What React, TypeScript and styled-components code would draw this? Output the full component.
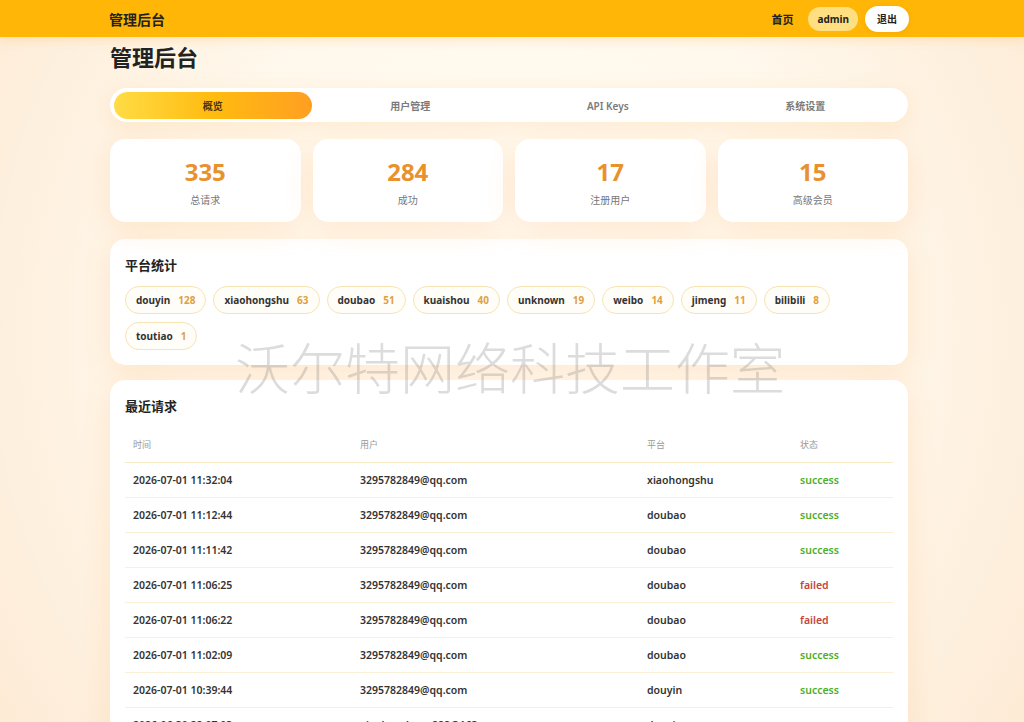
import React from "react";
import styled, { createGlobalStyle } from "styled-components";

const GlobalStyle = createGlobalStyle`
  html, body { margin: 0; padding: 0; }
  body {
    font-family: "Noto Sans", "Noto Sans CJK SC", sans-serif;
    color: #333;
    min-height: 722px;
    background:
      radial-gradient(ellipse 60% 80% at 50% 40%, #fffcf5 0%, #fff8ec 55%, #fdebd6 100%);
    background-color: #fff6e8;
  }
`;

const Header = styled.header`
  height: 37px;
  padding-right: 6px;
  background: #ffb606;
  box-shadow: 0 2px 10px rgba(255, 170, 40, 0.25);
`;

const HeaderInner = styled.div`
  width: 800px;
  height: 100%;
  margin: 0 auto;
  display: flex;
  align-items: center;
  justify-content: space-between;
`;

const Brand = styled.div`
  font-family: "Noto Sans CJK SC", sans-serif;
  font-size: 14px;
  font-weight: 700;
  color: #222;
`;

const Nav = styled.nav`
  display: flex;
  align-items: center;
  gap: 7px;
`;

const NavLink = styled.span`
  font-family: "Noto Sans CJK SC", sans-serif;
  font-size: 11px;
  font-weight: 700;
  color: #222;
  margin-right: 8px;
`;

const Pill = styled.span<{ $variant: "user" | "logout" }>`
  display: inline-flex;
  align-items: center;
  justify-content: center;
  height: ${(p) => (p.$variant === "user" ? "24px" : "26px")};
  padding: 0 ${(p) => (p.$variant === "user" ? "9px" : "12px")};
  border-radius: 13px;
  font-size: 10px;
  font-weight: 700;
  color: #222;
  background: ${(p) => (p.$variant === "user" ? "#ffdf80" : "#ffffff")};
  box-shadow: ${(p) => (p.$variant === "logout" ? "0 1px 4px rgba(200,120,0,0.2)" : "none")};
`;

const Page = styled.div`
  padding-right: 6px;
`;

const Main = styled.main`
  width: 798px;
  margin: 0 auto;
  padding-bottom: 40px;
`;

const PageTitle = styled.h1`
  margin: 4px 0 17px;
  font-family: "Noto Sans CJK SC", sans-serif;
  font-size: 22px;
  line-height: 30px;
  font-weight: 700;
  color: #222;
`;

const Tabs = styled.div`
  height: 34px;
  box-sizing: border-box;
  padding: 4px 4px 3px;
  border-radius: 17px;
  background: #fff;
  box-shadow: 0 6px 22px rgba(250, 170, 80, 0.18);
  display: grid;
  grid-template-columns: repeat(4, 1fr);
`;

const Tab = styled.div<{ $active?: boolean }>`
  display: flex;
  align-items: center;
  justify-content: center;
  border-radius: 14px;
  font-family: "Noto Sans", "Noto Sans CJK SC", sans-serif;
  font-size: 10px;
  font-weight: ${(p) => (p.$active ? 700 : 600)};
  color: ${(p) => (p.$active ? "#4a3510" : "#7a7a7a")};
  background: ${(p) =>
    p.$active ? "linear-gradient(90deg, #ffdc45 0%, #ffbb10 50%, #ff9f22 100%)" : "transparent"};
`;

const StatsGrid = styled.div`
  margin-top: 17px;
  display: grid;
  grid-template-columns: repeat(4, 1fr);
  gap: 12px;
`;

const Card = styled.section`
  background: #fff;
  border-radius: 15px;
  box-shadow: 0 8px 28px rgba(250, 165, 80, 0.2);
`;

const StatCard = styled(Card)`
  height: 83px;
  box-sizing: border-box;
  padding-top: 18px;
  display: flex;
  flex-direction: column;
  align-items: center;
`;

const StatValue = styled.div`
  font-size: 24px;
  line-height: 30px;
  font-weight: 700;
  color: #e8912d;
`;

const StatLabel = styled.div`
  margin-top: 6px;
  font-family: "Noto Sans CJK SC", sans-serif;
  font-size: 10px;
  line-height: 14px;
  color: #777;
`;

const PanelCard = styled(Card)<{ $gap: number }>`
  margin-top: ${(p) => p.$gap}px;
  padding: 17px 15px 15px;
`;

const PanelTitle = styled.h2`
  margin: 0 0 12px;
  font-family: "Noto Sans CJK SC", sans-serif;
  font-size: 13px;
  line-height: 18px;
  font-weight: 700;
  color: #222;
`;

const ChipWrap = styled.div`
  display: flex;
  flex-wrap: wrap;
  gap: 8px 7px;
`;

const Chip = styled.span`
  display: inline-flex;
  align-items: center;
  gap: 8px;
  height: 28px;
  box-sizing: border-box;
  padding: 0 10px;
  border: 1px solid #f6e4b4;
  border-radius: 14px;
  background: #fffdf8;
  font-size: 10px;
  font-weight: 700;
  color: #333;
`;

const ChipCount = styled.span`
  color: #e0a040;
`;

const Table = styled.table`
  width: 100%;
  border-collapse: collapse;
  table-layout: fixed;
`;

const Th = styled.th<{ $w?: number }>`
  width: ${(p) => (p.$w ? `${p.$w}px` : "auto")};
  height: 35px;
  padding: 0 8px;
  text-align: left;
  font-family: "Noto Sans CJK SC", sans-serif;
  font-size: 9px;
  font-weight: 400;
  color: #999;
  border-bottom: 1px solid #f7ebc6;
`;

const Td = styled.td`
  height: 34px;
  padding: 0 8px;
  font-size: 10.5px;
  font-weight: 600;
  color: #333;
  border-bottom: 1px solid #faf0d6;
  white-space: nowrap;
`;

const Status = styled.span<{ $ok: boolean }>`
  font-weight: 600;
  color: ${(p) => (p.$ok ? "#4fae2a" : "#c4463e")};
`;

const Watermark = styled.div`
  position: fixed;
  left: 0;
  right: 0;
  top: 334px;
  padding-right: 4px;
  text-align: center;
  font-family: "Noto Sans CJK SC", sans-serif;
  font-size: 55px;
  line-height: 62px;
  font-weight: 300;
  color: rgba(110, 110, 110, 0.24);
  pointer-events: none;
  white-space: nowrap;
`;

const stats = [
  { value: 335, label: "总请求" },
  { value: 284, label: "成功" },
  { value: 17, label: "注册用户" },
  { value: 15, label: "高级会员" },
];

const platforms: [string, number][] = [
  ["douyin", 128],
  ["xiaohongshu", 63],
  ["doubao", 51],
  ["kuaishou", 40],
  ["unknown", 19],
  ["weibo", 14],
  ["jimeng", 11],
  ["bilibili", 8],
  ["toutiao", 1],
];

const rows: [string, string, string, boolean][] = [
  ["2026-07-01 11:32:04", "3295782849@qq.com", "xiaohongshu", true],
  ["2026-07-01 11:12:44", "3295782849@qq.com", "doubao", true],
  ["2026-07-01 11:11:42", "3295782849@qq.com", "doubao", true],
  ["2026-07-01 11:06:25", "3295782849@qq.com", "doubao", false],
  ["2026-07-01 11:06:22", "3295782849@qq.com", "doubao", false],
  ["2026-07-01 11:02:09", "3295782849@qq.com", "doubao", true],
  ["2026-07-01 10:39:44", "3295782849@qq.com", "douyin", true],
  ["2026-06-30 22:07:03", "xiaohaosheng888@163.com", "douyin", true],
  ["2026-06-30 21:58:17", "xiaohaosheng888@163.com", "douyin", true],
];

export default function App() {
  return (
    <>
      <GlobalStyle />
      <Header>
        <HeaderInner>
          <Brand>管理后台</Brand>
          <Nav>
            <NavLink>首页</NavLink>
            <Pill $variant="user">admin</Pill>
            <Pill $variant="logout">退出</Pill>
          </Nav>
        </HeaderInner>
      </Header>
      <Page>
        <Main>
          <PageTitle>管理后台</PageTitle>
          <Tabs>
            <Tab $active>概览</Tab>
            <Tab>用户管理</Tab>
            <Tab>API Keys</Tab>
            <Tab>系统设置</Tab>
          </Tabs>
          <StatsGrid>
            {stats.map((s) => (
              <StatCard key={s.label}>
                <StatValue>{s.value}</StatValue>
                <StatLabel>{s.label}</StatLabel>
              </StatCard>
            ))}
          </StatsGrid>
          <PanelCard $gap={17}>
            <PanelTitle>平台统计</PanelTitle>
            <ChipWrap>
              {platforms.map(([name, n]) => (
                <Chip key={name}>
                  {name}
                  <ChipCount>{n}</ChipCount>
                </Chip>
              ))}
            </ChipWrap>
          </PanelCard>
          <PanelCard $gap={15}>
            <PanelTitle>最近请求</PanelTitle>
            <Table>
              <thead>
                <tr>
                  <Th $w={211}>时间</Th>
                  <Th $w={271}>用户</Th>
                  <Th $w={137}>平台</Th>
                  <Th>状态</Th>
                </tr>
              </thead>
              <tbody>
                {rows.map((r, i) => (
                  <tr key={i}>
                    <Td>{r[0]}</Td>
                    <Td>{r[1]}</Td>
                    <Td>{r[2]}</Td>
                    <Td>
                      <Status $ok={r[3]}>{r[3] ? "success" : "failed"}</Status>
                    </Td>
                  </tr>
                ))}
              </tbody>
            </Table>
          </PanelCard>
        </Main>
      </Page>
      <Watermark>沃尔特网络科技工作室</Watermark>
    </>
  );
}
